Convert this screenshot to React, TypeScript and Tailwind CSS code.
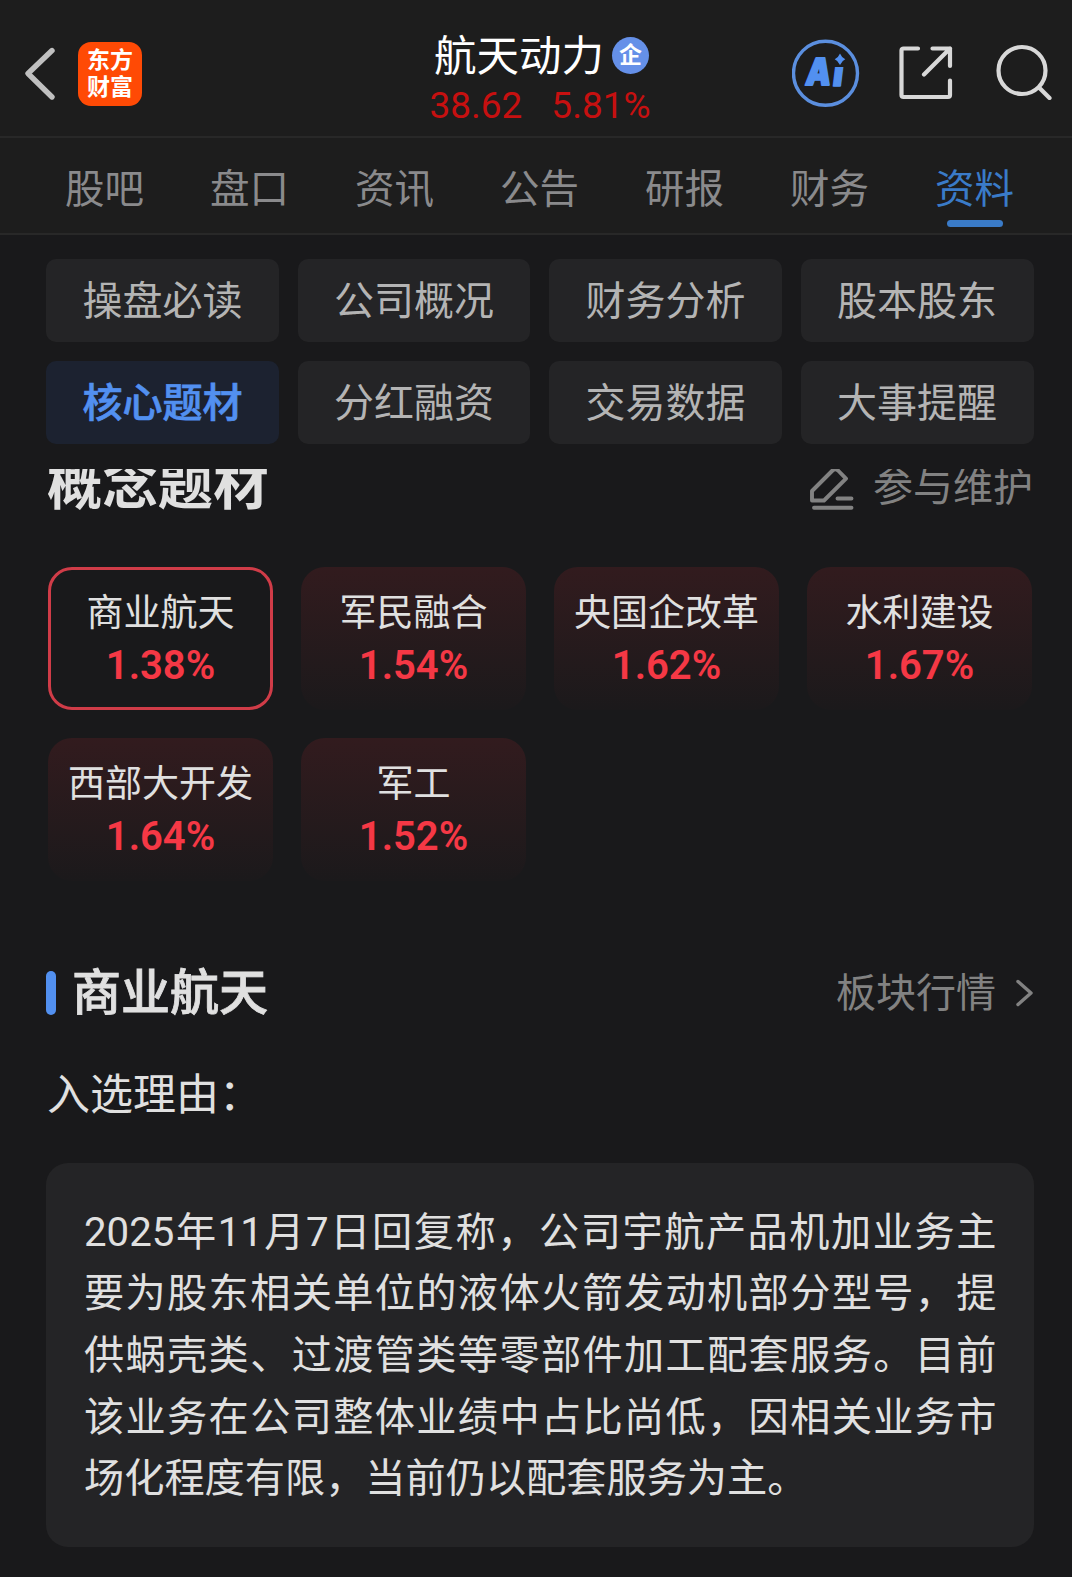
const tabs = ["股吧", "盘口", "资讯", "公告", "研报", "财务", "资料"];

const sections = [
  "操盘必读",
  "公司概况",
  "财务分析",
  "股本股东",
  "核心题材",
  "分红融资",
  "交易数据",
  "大事提醒",
];

const concepts = [
  { name: "商业航天", change: "1.38%" },
  { name: "军民融合", change: "1.54%" },
  { name: "央国企改革", change: "1.62%" },
  { name: "水利建设", change: "1.67%" },
  { name: "西部大开发", change: "1.64%" },
  { name: "军工", change: "1.52%" },
];

function BackIcon() {
  return (
    <svg width="32" height="56" viewBox="0 0 32 56" fill="none" stroke="#c0c0c0" strokeWidth="5.4" strokeLinecap="round" strokeLinejoin="round">
      <path d="M28 4.5 4 27.5 28 51" />
    </svg>
  );
}

function AiIcon() {
  return (
    <svg width="68" height="68" viewBox="0 0 68 68">
      <defs>
        <clipPath id="stem">
          <rect x="36" y="28" width="30" height="30" />
        </clipPath>
      </defs>
      <circle cx="33.5" cy="34.3" r="32" fill="none" stroke="#5b8fdf" strokeWidth="3.4" />
      <g fill="#5290f0" stroke="#5290f0" strokeLinejoin="round" fontFamily="Inter" fontWeight="900">
        <g transform="translate(12.8 45.5) skewX(-7)">
          <text x="0" y="0" fontSize="37" strokeWidth="2" textLength="25" lengthAdjust="spacingAndGlyphs">A</text>
        </g>
        <g clipPath="url(#stem)">
          <g transform="translate(39.8 47.3) skewX(-7)">
            <text x="0" y="0" fontSize="35" strokeWidth="1.4">i</text>
          </g>
        </g>
      </g>
      <path d="M48 14.5 Q49.6 18.6 53.3 20.2 Q49.6 21.8 48 26 Q46.4 21.8 42.7 20.2 Q46.4 18.6 48 14.5Z" fill="#5290f0" />
    </svg>
  );
}

function ShareIcon() {
  return (
    <svg width="54" height="54" viewBox="0 0 54 54" fill="none" stroke="#d8d8d8" strokeWidth="4.2" strokeLinecap="round" strokeLinejoin="round">
      <path d="M19 2.5H4.5a2 2 0 0 0-2 2V49a2 2 0 0 0 2 2H49a2 2 0 0 0 2-2V34.5" />
      <path d="M33.5 2.5H51V20M51 2.5 25 28.5" />
    </svg>
  );
}

function SearchIcon() {
  return (
    <svg width="56" height="56" viewBox="0 0 56 56" fill="none" stroke="#d8d8d8" strokeWidth="4.2" strokeLinecap="round">
      <circle cx="26" cy="26.5" r="23.5" />
      <path d="m43.5 44 10 10" />
    </svg>
  );
}

function EditIcon() {
  return (
    <svg width="44" height="44" viewBox="0 0 44 44" fill="none" stroke="#828282" strokeWidth="3.9" strokeLinecap="round" strokeLinejoin="round">
      <path d="M2 34.5V25L22.5 4.5a4 4 0 0 1 5.6 0L36 12.6 14 34.5Z" />
      <path d="M27.5 32.5H41.5M4 41.7H41.5" />
    </svg>
  );
}

export default function App() {
  return (
    <div className="h-[1577px] w-[1072px] overflow-hidden bg-[#19191b] font-['Roboto','Noto_Sans_CJK_SC',sans-serif] text-[#e0e0e0]">
      <header className="grid h-[138px] grid-cols-[1fr_auto_1fr] border-b-2 border-[#282828] bg-[#1d1d1d]">
        <div className="flex items-start pl-[24px] pt-[42px]">
          <div className="mt-[4px]">
            <BackIcon />
          </div>
          <div className="ml-[22px] flex h-16 w-16 flex-col items-center justify-center rounded-[13px] bg-[#ff4a05] text-[23px] leading-[27px] font-bold text-white">
            <span>东方</span>
            <span>财富</span>
          </div>
        </div>
        <div className="flex flex-col items-center pt-[33px] pl-[8px]">
          <div className="flex h-12 items-center gap-[8px] pl-[3px]">
            <h1 className="text-[42.5px] leading-[48px] text-white">航天动力</h1>
            <span className="-mt-[3px] flex h-[37px] w-[37px] items-center justify-center rounded-full bg-[#6590e8] text-[23px] leading-none font-bold text-white">
              企
            </span>
          </div>
          <div className="-mt-[2px] flex gap-[29px] text-[37px] leading-[54px] text-[#c61010]">
            <span>38.62</span>
            <span>5.81%</span>
          </div>
        </div>
        <div className="flex items-start justify-end pr-[20px] pt-[39px]">
          <AiIcon />
          <div className="ml-[39px] mt-[7px]">
            <ShareIcon />
          </div>
          <div className="ml-[43px] mt-[5px]">
            <SearchIcon />
          </div>
        </div>
      </header>

      <nav className="grid h-[97px] grid-cols-7 border-b-2 border-[#282828] bg-[#1d1d1d] pr-[25px] pl-[32px]">
        {tabs.map((tab) => {
          const active = tab === "资料";
          return (
            <div key={tab} className="flex flex-col items-center pt-[28px]">
              <span className={active ? "text-[39.5px] leading-[48px] text-[#3a7bc8]" : "text-[39.5px] leading-[48px] text-[#8a8a8c]"}>{tab}</span>
              {active && <span className="mt-[6px] h-[7px] w-[56px] rounded-full bg-[#3a7bc8]" />}
            </div>
          );
        })}
      </nav>

      <div className="grid grid-cols-4 gap-x-[18.7px] gap-y-[19px] pt-[24px] pr-[38.5px] pl-[46px]">
        {sections.map((label) => (
          <button
            key={label}
            className={
              label === "核心题材"
                ? "h-[83px] rounded-[10px] bg-[#1c2230] pt-px text-[40px] leading-[84px] font-medium text-[#5290f0] [-webkit-text-stroke:0.7px_#5290f0]"
                : "h-[83px] rounded-[10px] bg-[#242426] pt-px text-[40px] leading-[84px] text-[#b4b4b4]"
            }
          >
            {label}
          </button>
        ))}
      </div>

      <div className="mt-[25px] flex h-[98px] items-start justify-between overflow-hidden pr-[39px] pl-[47px]">
        <h2 className="-mt-[23px] text-[55.4px] leading-[80px] font-bold">概念题材</h2>
        <div className="flex items-start gap-[19px] text-[#828282]">
          <div className="-mt-[3px]">
            <EditIcon />
          </div>
          <span className="-mt-[11px] text-[40px] leading-[60px]">参与维护</span>
        </div>
      </div>

      <div className="grid grid-cols-4 gap-7 pr-[40px] pl-[48px]">
        {concepts.map((c, i) => (
          <div
            key={c.name}
            className={
              i === 0
                ? "flex h-[143px] flex-col items-center rounded-[24px] border-3 border-[#d03c48] pt-[20px]"
                : "flex h-[143px] flex-col items-center rounded-[24px] bg-linear-to-b from-[#321b1e] to-[#1b191b] pt-[23px]"
            }
          >
            <span className="text-[37px] leading-[48px]">{c.name}</span>
            <span className="-mt-[2px] text-[40px] leading-[60px] font-semibold text-[#f53845]">{c.change}</span>
          </div>
        ))}
      </div>

      <div className="mt-[80px] flex h-16 items-center justify-between pr-[39px] pl-[46px]">
        <div className="flex items-center">
          <span className="-mt-px h-[44px] w-[10px] rounded-full bg-[#5290f0]" />
          <h3 className="mt-[2px] ml-[16px] text-[49px] leading-[64px] font-medium [-webkit-text-stroke:0.8px_#e0e0e0]">商业航天</h3>
        </div>
        <div className="flex items-center text-[#828282]">
          <span className="mt-[2px] text-[40px] leading-[60px]">板块行情</span>
          <svg className="ml-[20px]" width="17" height="28" viewBox="0 0 17 28" fill="none" stroke="#828282" strokeWidth="3.4" strokeLinecap="round" strokeLinejoin="round">
            <path d="M2 2.5 15 14 2 25.5" />
          </svg>
        </div>
      </div>

      <p className="mt-[40px] pl-[47px] text-[43px] leading-[60px]">入选理由：</p>

      <div className="mt-[38px] mr-[38.5px] ml-[46px] h-[384px] rounded-[22px] bg-[#242426] pt-[38.5px] pr-[37px] pl-[38px]">
        <p className="text-justify text-[40.2px] leading-[61.7px]">
          2025年11月7日回复称，公司宇航产品机加业务主要为股东相关单位的液体火箭发动机部分型号，提供蜗壳类、过渡管类等零部件加工配套服务。目前该业务在公司整体业绩中占比尚低，因相关业务市场化程度有限，当前仍以配套服务为主。
        </p>
      </div>
    </div>
  );
}
